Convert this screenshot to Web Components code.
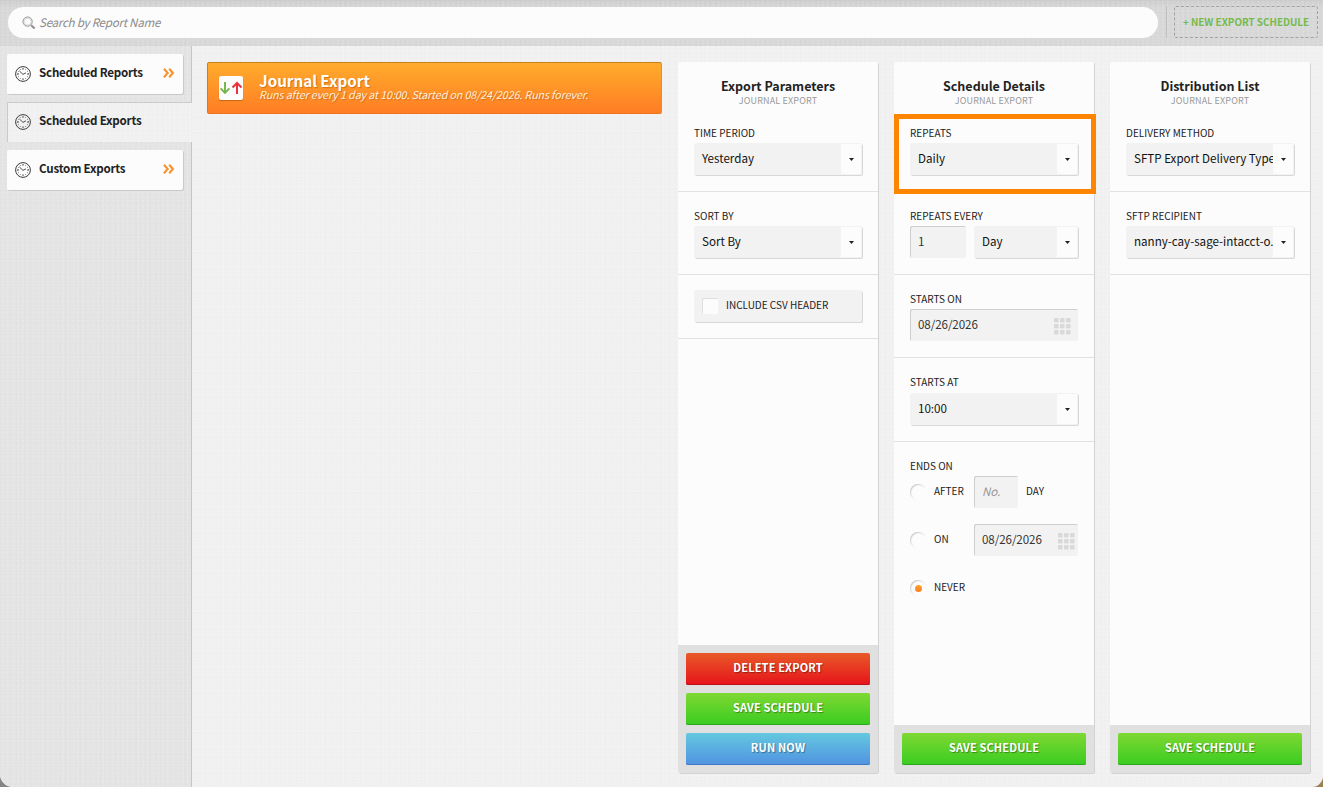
<!DOCTYPE html>
<html lang="en">
<head>
<meta charset="utf-8">
<title>Scheduled Exports</title>
<style>
  html, body { margin: 0; height: 100%; }
  body {
    background: linear-gradient(90deg, #858585 50%, #9c7f52 50%);
    font-family: "Noto Sans CJK SC", "Open Sans", sans-serif;
    font-size: 11.6px;
    line-height: 16px;
    color: #222;
    overflow: hidden;
    --grain:
      radial-gradient(circle at 1px 1px, rgba(0,0,0,.013) 0.6px, transparent 1.1px) 0 0 / 4px 4px,
      radial-gradient(circle at 1px 1px, rgba(255,255,255,.16) 0.6px, transparent 1.2px) 2px 1px / 5px 3px,
      radial-gradient(circle at 1px 1px, rgba(0,0,0,.012) 0.6px, transparent 1.1px) 2px 2px / 7px 5px;
  }
</style>
</head>
<body>
<app-shell>
  <search-bar slot="top" placeholder="Search by Report Name"></search-bar>
  <new-button slot="top">+ NEW EXPORT SCHEDULE</new-button>

  <nav-item slot="nav" arrow>Scheduled Reports</nav-item>
  <nav-item slot="nav" active>Scheduled Exports</nav-item>
  <nav-item slot="nav" arrow>Custom Exports</nav-item>

  <export-card name="Journal Export">Runs after every 1 day at 10:00. Started on 08/24/2026. Runs forever.</export-card>

  <side-panel name="Export Parameters" sub="JOURNAL EXPORT">
    <form-section label="TIME PERIOD"><select-box>Yesterday</select-box></form-section>
    <form-section label="SORT BY"><select-box>Sort By</select-box></form-section>
    <form-section><check-box>INCLUDE CSV HEADER</check-box></form-section>
    <action-button slot="footer" kind="red">DELETE EXPORT</action-button>
    <action-button slot="footer" kind="green">SAVE SCHEDULE</action-button>
    <action-button slot="footer" kind="blue">RUN NOW</action-button>
  </side-panel>

  <side-panel name="Schedule Details" sub="JOURNAL EXPORT">
    <form-section label="REPEATS" highlight><select-box>Daily</select-box></form-section>
    <form-section label="REPEATS EVERY">
      <text-field style="width: 56px">1</text-field>
      <select-box>Day</select-box>
    </form-section>
    <form-section label="STARTS ON"><text-field calendar>08/26/2026</text-field></form-section>
    <form-section label="STARTS AT" style="--label-gap: 3px"><select-box>10:00</select-box></form-section>
    <form-section label="ENDS ON" last>
      <radio-row label="AFTER">
        <text-field hint style="width: 44px">No.</text-field>
        <span style="margin-top: -2px">DAY</span>
      </radio-row>
      <radio-row label="ON"><text-field calendar style="width: 104px">08/26/2026</text-field></radio-row>
      <radio-row label="NEVER" checked></radio-row>
    </form-section>
    <action-button slot="footer" kind="green">SAVE SCHEDULE</action-button>
  </side-panel>

  <side-panel name="Distribution List" sub="JOURNAL EXPORT">
    <form-section label="DELIVERY METHOD"><select-box>SFTP Export Delivery Type</select-box></form-section>
    <form-section label="SFTP RECIPIENT"><select-box>nanny-cay-sage-intacct-o.</select-box></form-section>
    <action-button slot="footer" kind="green">SAVE SCHEDULE</action-button>
  </side-panel>
</app-shell>

<script>
  class Base extends HTMLElement {
    constructor() {
      super();
      this.attachShadow({ mode: 'open' });
    }
    connectedCallback() {
      this.shadowRoot.innerHTML = `<style>*, :host { box-sizing: border-box; }</style>` + this.render();
    }
    attr(name) {
      return this.getAttribute(name) || '';
    }
  }

  customElements.define('app-shell', class extends Base {
    render() {
      return `
        <style>
          :host {
            display: flex;
            flex-direction: column;
            height: 787px;
            border-radius: 0 0 11px 13px;
            overflow: hidden;
            background: var(--grain), #f1f1f1;
          }
          header {
            display: flex;
            flex: none;
            height: 46px;
            padding: 6px 5px 8px 8px;
            background: var(--grain), linear-gradient(#cdcdcd, #d8d8d8 8px, #d8d8d8);
          }
          .body { display: flex; flex: 1; }
          nav {
            width: 192px;
            display: flex;
            flex-direction: column;
            gap: 8px;
            padding: 8px 0 0 7px;
            background: var(--grain), #e4e4e4;
            box-shadow: inset -1px 0 #c6c6c6;
          }
          main {
            flex: 1;
            display: flex;
            gap: 16px;
            padding: 16px 13px 14px 15px;
          }
        </style>
        <header><slot name="top"></slot></header>
        <div class="body">
          <nav><slot name="nav"></slot></nav>
          <main><slot></slot></main>
        </div>
      `;
    }
  });

  customElements.define('search-bar', class extends Base {
    render() {
      return `
        <style>
          :host {
            flex: 1;
            display: flex;
            align-items: center;
            height: 31px;
            margin-top: 1px;
            padding-left: 14px;
            border-radius: 16px;
            background: #fcfcfc;
            color: #8c8c8c;
            font-style: italic;
          }
          svg { flex: none; margin-right: 3px; }
          span { letter-spacing: -.27px; margin-top: -2px; }
        </style>
        <svg width="14" height="14" viewBox="0 0 14 14" fill="none" stroke="#8f8f8f">
          <circle cx="5.6" cy="5.6" r="4.6" stroke-width="1"/>
          <circle cx="5.6" cy="5.6" r="3.4" stroke="#d4d4d4" stroke-width=".8"/>
          <path d="M9.2 9.2l3.4 3.3" stroke-width="2"/>
        </svg>
        <span>${this.attr('placeholder')}</span>
      `;
    }
  });

  customElements.define('new-button', class extends Base {
    render() {
      return `
        <style>
          :host { display: flex; margin-left: 8px; padding-left: 7px; flex: none; border-left: 1px solid #c0c0c0; }
          div {
            width: 144px;
            height: 32px;
            border: 1px dashed #a2a2a2;
            border-radius: 2px;
            display: flex;
            align-items: center;
            justify-content: center;
            color: #74bb4c;
            font-weight: 600;
            font-size: 9.85px;
            white-space: nowrap;
          }
        </style>
        <div><slot></slot></div>
      `;
    }
  });

  customElements.define('nav-item', class extends Base {
    render() {
      const arrow = this.hasAttribute('arrow') ? `
        <svg class="arrow" width="12" height="10" viewBox="0 0 12 10" fill="none" stroke="#f7922d" stroke-width="2.1">
          <path d="M1 .8L4.7 5 1 9.2M6.2 .8L9.9 5 6.2 9.2"/>
        </svg>` : '';
      return `
        <style>
          :host {
            display: flex;
            align-items: center;
            flex: none;
            width: 176px;
            height: 40px;
            padding: 0 8px;
            border-radius: 2px;
            background: #fcfcfc;
            box-shadow: 1px 1px #cacaca;
            font-weight: 600;
          }
          :host([active]) {
            width: 185px;
            border-radius: 0;
            background: var(--grain), #f1f1f1;
            box-shadow: inset 1px 1px #cacaca;
          }
          .clock { flex: none; margin-right: 8px; }
          span { flex: 1; margin-top: -4px; white-space: nowrap; letter-spacing: -.22px; }
          .arrow { margin-top: -2px; }
        </style>
        <svg class="clock" width="16" height="16" viewBox="0 0 16 16" fill="none" stroke="#3c3c3c">
          <circle cx="8" cy="8" r="7.4" stroke-width="1"/>
          <path d="M8 2.2v1.4M8 12.4v1.4M2.2 8h1.4M12.4 8h1.4" stroke-width="1.3"/>
          <path d="M5.1 3l.4.8M10.9 3l-.4.8M5.1 13l.4-.8M10.9 13l-.4-.8M3 5.1l.8.4M3 10.9l.8-.4M13 10.9l-.8-.4M13 5.1l-.8.4" stroke-width=".7"/>
          <path d="M4.4 5L8 8.4l3-1.6" stroke-width=".9"/>
        </svg>
        <span><slot></slot></span>
        ${arrow}
      `;
    }
  });

  customElements.define('export-card', class extends Base {
    render() {
      return `
        <style>
          :host {
            flex: 1;
            display: flex;
            align-items: center;
            height: 52px;
            padding-left: 11px;
            border: 1px solid;
            border-color: #c57f1f #ef8a25 #ee7420 #d07a22;
            border-radius: 2px;
            background: linear-gradient(#ffac2c, #ff7d24);
            color: #fff;
            text-shadow: 1px 1px 1px rgba(150,70,0,.45);
          }
          svg { flex: none; border-radius: 2px; background: #fcfcfc; box-shadow: 0 1px 1px rgba(120,50,0,.4); }
          .text { margin: -4px 0 0 16px; white-space: nowrap; }
          .name { font-size: 15.2px; font-weight: 700; line-height: 16px; }
          .info { font-size: 10.74px; font-style: italic; line-height: 13px; color: #fff0dd; letter-spacing: -.13px; }
        </style>
        <svg width="24" height="24" viewBox="0 0 24 24" fill="none" stroke-width="2">
          <path d="M6 6v11M1.6 12.4L6 16.9l4.4-4.5" stroke="#74b84c"/>
          <path d="M18 18V7M13.5 11.5L18 7l4.5 4.5" stroke="#e8323c"/>
        </svg>
        <div class="text">
          <div class="name">${this.attr('name')}</div>
          <div class="info"><slot></slot></div>
        </div>
      `;
    }
  });

  customElements.define('side-panel', class extends Base {
    render() {
      return `
        <style>
          :host {
            flex: none;
            display: flex;
            flex-direction: column;
            width: 200px;
            border-radius: 2px;
            background: #fcfcfc;
            box-shadow: 1px 1px #d3d3d3;
          }
          .head { height: 47px; padding-top: 16px; text-align: center; flex: none; }
          h2 { margin: 0; font-size: 12.5px; font-weight: 600; line-height: 16px; }
          .sub { font-size: 9px; line-height: 14px; color: #9a9a9a; letter-spacing: .15px; }
          .sections { flex: 1; }
          footer {
            display: flex;
            flex-direction: column;
            gap: 8px;
            padding: 8px;
            background: #e0e0e0;
            border-radius: 0 0 2px 2px;
          }
        </style>
        <div class="head">
          <h2>${this.attr('name')}</h2>
          <div class="sub">${this.attr('sub')}</div>
        </div>
        <div class="sections"><slot></slot></div>
        <footer><slot name="footer"></slot></footer>
      `;
    }
  });

  customElements.define('form-section', class extends Base {
    render() {
      const label = this.attr('label');
      return `
        <style>
          :host {
            display: block;
            position: relative;
            padding: 15px 16px 16px;
            border-bottom: 1px solid #e2e2e2;
          }
          :host([last]) { border: 0; }
          :host([highlight])::after {
            content: "";
            position: absolute;
            inset: 5px -2px -3px 0;
            border: 5px solid #ff8400;
            z-index: 2;
          }
          label {
            display: block;
            font-size: 10px;
            line-height: 17px;
            margin-bottom: var(--label-gap, 2px);
          }
          .row { display: flex; flex-wrap: wrap; gap: 16px 8px; }
        </style>
        ${label ? `<label>${label}</label>` : ''}
        <div class="row"><slot></slot></div>
      `;
    }
  });

  customElements.define('select-box', class extends Base {
    render() {
      return `
        <style>
          :host {
            flex: 1;
            display: flex;
            height: 32px;
            min-width: 0;
            border-radius: 2px;
            background: #f2f2f2;
            box-shadow: 1px 1px #d8d8d8;
            color: #111;
          }
          span {
            flex: 1;
            min-width: 0;
            padding-left: 8px;
            line-height: 30px;
            white-space: nowrap;
            overflow: hidden;
          }
          i {
            flex: none;
            width: 21px;
            display: flex;
            align-items: center;
            justify-content: center;
            background: #fcfcfc;
            border: solid #f2f2f2;
            border-width: 1px 1px 1px 0;
            border-radius: 0 2px 2px 0;
          }
        </style>
        <span><slot></slot></span>
        <i><svg width="5" height="3" viewBox="0 0 5 3"><path d="M0 0h5L2.5 3z" fill="#222"/></svg></i>
      `;
    }
  });

  customElements.define('text-field', class extends Base {
    render() {
      let dots = '';
      for (let i = 0; i < 9; i++) {
        dots += `<rect x="${(i % 3) * 6}" y="${Math.floor(i / 3) * 6}" width="4.6" height="4.6" rx="1"/>`;
      }
      const icon = `<svg width="17" height="17" viewBox="0 0 17 17" fill="#d9d9d9">${dots}</svg>`;
      return `
        <style>
          :host {
            display: flex;
            align-items: center;
            justify-content: space-between;
            width: 100%;
            height: 32px;
            padding: 0 7px 0 8px;
            border-radius: 2px;
            background: #f2f2f2;
            box-shadow: inset 1px 1px #cfcfcf;
            font-size: 11.6px;
            letter-spacing: -.08px;
            color: #333;
          }
          :host([hint]) { color: #999; font-style: italic; }
          span { margin-top: -2px; }
          svg { margin-top: 3px; }
          :host([style*="104px"]) { padding-right: 3px; }
        </style>
        <span><slot></slot></span>
        ${this.hasAttribute('calendar') ? icon : ''}
      `;
    }
  });

  customElements.define('check-box', class extends Base {
    render() {
      return `
        <style>
          :host {
            flex: 1;
            display: flex;
            align-items: center;
            height: 32px;
            padding-left: 8px;
            border-radius: 2px;
            background: #f2f2f2;
            box-shadow: 1px 1px #d8d8d8;
            font-size: 10px;
          }
          i { width: 16px; height: 16px; margin-right: 8px; background: #fcfcfc; box-shadow: inset 1px 1px #dedede; border-radius: 1px; }
          span { margin-top: -2px; }
        </style>
        <i></i><span><slot></slot></span>
      `;
    }
  });

  customElements.define('radio-row', class extends Base {
    render() {
      return `
        <style>
          :host { display: flex; align-items: center; gap: 8px; width: 100%; height: 32px; font-size: 10px; }
          i {
            flex: none;
            display: flex;
            align-items: center;
            justify-content: center;
            width: 16px;
            height: 16px;
            border-radius: 50%;
            box-shadow: inset 1px 1px 1px #cecece;
          }
          :host([checked]) i::after {
            content: "";
            width: 7px;
            height: 7px;
            margin: 1px 0 0 1px;
            border-radius: 50%;
            background: linear-gradient(#fda32c, #fa7d22);
          }
          label { width: 32px; margin-top: -2px; }
        </style>
        <i></i><label>${this.attr('label')}</label><slot></slot>
      `;
    }
  });

  customElements.define('action-button', class extends Base {
    render() {
      return `
        <style>
          :host {
            height: 32px;
            display: flex;
            align-items: center;
            justify-content: center;
            border-radius: 2px;
            color: #fff;
            font-size: 11px;
            letter-spacing: .15px;
            font-weight: 600;
            text-shadow: 1px 1px 1px rgba(0,0,0,.35);
          }
          :host([kind="red"]) { background: linear-gradient(#e85a28, #e6131b); box-shadow: inset 0 -1px #bd1016; }
          :host([kind="green"]) { background: linear-gradient(#7fd833, #3acc21); box-shadow: inset 0 -1px #2da51c; }
          :host([kind="blue"]) { background: linear-gradient(#64c8e0, #5092e0); box-shadow: inset 0 -1px #3f78c4; }
          span { margin-top: -4px; }
        </style>
        <span><slot></slot></span>
      `;
    }
  });
</script>
</body>
</html>
